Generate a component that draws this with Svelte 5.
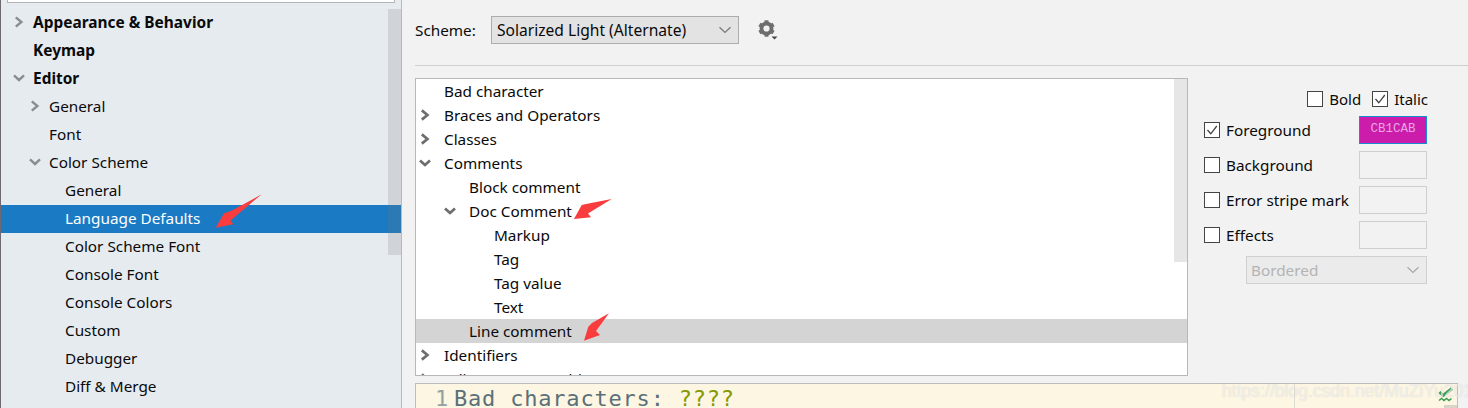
<script>
  const navItems = [
    { label: 'Appearance & Behavior', depth: 0, bold: true, arrow: 'right' },
    { label: 'Keymap', depth: 0, bold: true },
    { label: 'Editor', depth: 0, bold: true, arrow: 'down' },
    { label: 'General', depth: 1, arrow: 'right' },
    { label: 'Font', depth: 1 },
    { label: 'Color Scheme', depth: 1, arrow: 'down' },
    { label: 'General', depth: 2 },
    { label: 'Language Defaults', depth: 2, selected: true },
    { label: 'Color Scheme Font', depth: 2 },
    { label: 'Console Font', depth: 2 },
    { label: 'Console Colors', depth: 2 },
    { label: 'Custom', depth: 2 },
    { label: 'Debugger', depth: 2 },
    { label: 'Diff & Merge', depth: 2 }
  ]

  const treeItems = [
    { label: 'Bad character', depth: 0 },
    { label: 'Braces and Operators', depth: 0, arrow: 'right' },
    { label: 'Classes', depth: 0, arrow: 'right' },
    { label: 'Comments', depth: 0, arrow: 'down' },
    { label: 'Block comment', depth: 1 },
    { label: 'Doc Comment', depth: 1, arrow: 'down' },
    { label: 'Markup', depth: 2 },
    { label: 'Tag', depth: 2 },
    { label: 'Tag value', depth: 2 },
    { label: 'Text', depth: 2 },
    { label: 'Line comment', depth: 1, selected: true },
    { label: 'Identifiers', depth: 0, arrow: 'right' },
    { label: 'Inline parameter hints', depth: 0, arrow: 'right' }
  ]

  const attributes = [
    { label: 'Foreground', checked: true, color: 'CB1CAB' },
    { label: 'Background' },
    { label: 'Error stripe mark' },
    { label: 'Effects' }
  ]

  const arrows = [
    '261.7,194.3 231,211 224,213.3 215.7,227.7 233.3,224.3 230.5,220.5',
    '611.7,199 586,204 581.7,205 574,219 591,217.3 588,213.5',
    '609,313.3 592,323 588.3,326.7 584,340.7 600,335 596,331'
  ]
</script>

{#snippet chevron(dir)}
  <svg class="chevron" width="12" height="12" viewBox="0 0 12 12" aria-hidden="true">
    {#if dir === 'right'}
      <path d="M2.8 1.4 8.4 6l-5.6 4.6" />
    {:else}
      <path d="M1 3.4 6 8l5-4.6" />
    {/if}
  </svg>
{/snippet}

{#snippet checkbox(checked)}
  <span class="box">
    {#if checked}
      <svg width="14" height="14" viewBox="0 0 14 14" aria-hidden="true">
        <path d="M2.5 7 5.8 10.8 11.8 3" />
      </svg>
    {/if}
  </span>
{/snippet}

<div class="window">
  <aside class="sidebar">
    <div class="search"></div>
    <nav class="nav">
      {#each navItems as item}
        <div class="nav-row d{item.depth}" class:bold={item.bold} class:selected={item.selected}>
          {#if item.arrow}
            <span class="nav-arrow">{@render chevron(item.arrow)}</span>
          {/if}
          {item.label}
        </div>
      {/each}
    </nav>
    <div class="side-scroll"></div>
  </aside>

  <main class="content">
    <div class="scheme">
      <span class="scheme-label">Scheme:</span>
      <div class="combo">
        <span>Solarized Light (Alternate)</span>
        <svg width="14" height="8" viewBox="0 0 14 8" aria-hidden="true">
          <path d="M1.5 1.2 7 6.5l5.5-5.3" />
        </svg>
      </div>
      <svg class="gear" width="24" height="24" viewBox="0 0 24 24" aria-hidden="true">
        <g transform="translate(10.5 10.5)">
          <circle r="5" fill="none" stroke="#6e6e6e" stroke-width="3.8" />
          {#each [0, 60, 120, 180, 240, 300] as angle}
            <rect x="-2" y="-8.2" width="4" height="3.2" fill="#6e6e6e" transform="rotate({angle})" />
          {/each}
        </g>
        <path d="M15.5 18.5h6l-3 3z" fill="#444" />
      </svg>
    </div>

    <div class="rule"></div>

    <div class="middle">
      <div class="tree">
        {#each treeItems as item}
          <div class="tree-row t{item.depth}" class:selected={item.selected}>
            {#if item.arrow}
              <span class="tree-arrow">{@render chevron(item.arrow)}</span>
            {/if}
            {item.label}
          </div>
        {/each}
        <div class="tree-scroll"></div>
      </div>

      <div class="options">
        <div class="styles">
          <label class="check">{@render checkbox(false)}Bold</label>
          <label class="check">{@render checkbox(true)}Italic</label>
        </div>
        {#each attributes as attr}
          <div class="attr">
            <label class="check">{@render checkbox(attr.checked)}{attr.label}</label>
            <div class="swatch" class:filled={attr.color}>{attr.color ?? ''}</div>
          </div>
        {/each}
        <div class="effect-select">
          <span>Bordered</span>
          <svg width="14" height="8" viewBox="0 0 14 8" aria-hidden="true">
            <path d="M1.5 1.2 7 6.5l5.5-5.3" />
          </svg>
        </div>
      </div>
    </div>

    <div class="preview">
      <span class="line-no">1</span>
      <span class="code">Bad characters: <span class="bad">????</span></span>
      <div class="margin-line"></div>
      <svg class="status" width="18" height="16" viewBox="0 0 18 16" aria-hidden="true">
        <path d="M1.5 5 5 8.5 14 1.5" fill="none" stroke="#3f9f55" stroke-width="3" />
        <path d="M1 13.5l2.5-2 2.5 2 2.5-2 2.5 2 2.5-2" fill="none" stroke="#3f9f55" stroke-width="1.6" />
      </svg>
      <div class="preview-thumb"></div>
    </div>
  </main>

  <svg class="arrows" width="1468" height="408" viewBox="0 0 1468 408" aria-hidden="true">
    {#each arrows as points}
      <polygon {points} fill="#f93c3e" />
    {/each}
  </svg>
  <div class="watermark">https://blog.csdn.net/MuZiYu2010</div>
</div>

<style>
  :global(body) {
    margin: 0;
    overflow: hidden;
    background: #f2f2f2;
  }

  .window {
    position: relative;
    display: flex;
    width: 1468px;
    height: 408px;
    overflow: hidden;
    font-family: 'Noto Sans', 'Open Sans', sans-serif;
    font-size: 15.3px;
    color: #0a0a0a;
    background: #f2f2f2;
  }

  .sidebar {
    position: relative;
    flex: 0 0 402px;
    box-sizing: border-box;
    height: 408px;
    background: #e6ebf0;
    border-left: 1px solid #6f6a70;
    border-right: 1px solid #b9b9b9;
  }

  .search {
    box-sizing: border-box;
    width: 388px;
    height: 3px;
    margin-left: 6px;
    background: #fff;
    border: 1px solid #b5b5b5;
    border-top: 0;
  }

  .nav { padding-top: 6px; }

  .nav-row {
    position: relative;
    height: 28px;
    line-height: 26px;
    white-space: nowrap;
  }
  .nav-row.d0 { padding-left: 32px; }
  .nav-row.d1 { padding-left: 48px; }
  .nav-row.d2 { padding-left: 64px; }
  .nav-row.bold { font-weight: 700; font-size: 15.45px; }
  .nav-row.selected {
    background: #1a7bc4;
    color: #fff;
  }

  .nav-arrow {
    position: absolute;
    top: 7px;
    display: flex;
  }
  .d0 .nav-arrow { left: 12px; }
  .d1 .nav-arrow { left: 28px; }

  .chevron path {
    fill: none;
    stroke: #8a8d90;
    stroke-width: 2.4;
  }

  .side-scroll {
    position: absolute;
    top: 9px;
    right: 0;
    width: 13px;
    height: 246px;
    background: rgba(120, 120, 120, 0.2);
  }

  .content {
    flex: 1;
    min-width: 0;
    padding-left: 13px;
  }

  .scheme {
    display: flex;
    align-items: center;
    height: 28px;
    padding-top: 16px;
  }
  .scheme-label { width: 76px; }

  .combo {
    box-sizing: border-box;
    display: flex;
    align-items: center;
    justify-content: space-between;
    width: 248px;
    height: 28px;
    padding: 0 6px 0 5px;
    background: #e3e3e3;
    border: 1px solid #adadad;
    font-size: 15.6px;
  }
  .combo path, .effect-select path {
    fill: none;
    stroke: #777;
    stroke-width: 1.2;
  }

  .gear { margin: 0 0 0 17px; }

  .rule {
    height: 1px;
    margin-top: 21px;
    background: #cfcfcf;
  }

  .middle {
    display: flex;
    margin-top: 12px;
  }

  .tree {
    position: relative;
    box-sizing: border-box;
    flex: 0 0 773px;
    height: 298px;
    overflow: hidden;
    background: #fff;
    border: 1px solid #b8b8b8;
  }

  .tree-row {
    position: relative;
    height: 24px;
    line-height: 24px;
    white-space: nowrap;
  }
  .tree-row.t0 { padding-left: 28px; }
  .tree-row.t1 { padding-left: 53px; }
  .tree-row.t2 { padding-left: 78px; }
  .tree-row.selected { background: #d4d4d4; }

  .tree-arrow {
    position: absolute;
    top: 6px;
    display: flex;
  }
  .t0 .tree-arrow { left: 3px; }
  .t1 .tree-arrow { left: 28px; }
  .tree-arrow .chevron path { stroke: #6e6e6e; stroke-width: 2.7; }

  .tree-scroll {
    position: absolute;
    top: 0;
    right: 0;
    width: 13px;
    height: 183px;
    background: #e6e6e6;
  }

  .options {
    display: flex;
    flex-direction: column;
    gap: 7px;
    width: 223px;
    margin-left: 16px;
  }

  .styles {
    display: flex;
    justify-content: flex-end;
    gap: 11px;
    height: 28px;
    margin: 7px -1px -4px 0;
    align-items: center;
    font-size: 15px;
  }

  .check {
    display: flex;
    align-items: center;
    gap: 6px;
    white-space: nowrap;
  }

  .box {
    box-sizing: border-box;
    display: flex;
    align-items: center;
    justify-content: center;
    flex: 0 0 16px;
    width: 16px;
    height: 16px;
    background: #fff;
    border: 1px solid #444;
  }
  .box path {
    fill: none;
    stroke: #444;
    stroke-width: 1.3;
  }

  .attr {
    display: flex;
    align-items: center;
    justify-content: space-between;
    height: 28px;
  }

  .swatch {
    box-sizing: border-box;
    width: 68px;
    height: 28px;
    border: 1px solid #cfcfcf;
    font-family: 'Liberation Mono', monospace;
    font-size: 12.5px;
    line-height: 24px;
    text-align: center;
  }
  .swatch.filled {
    background: #cb1cab;
    border-color: #1a8ad4;
    color: #eaa6de;
  }

  .effect-select {
    box-sizing: border-box;
    display: flex;
    align-items: center;
    justify-content: space-between;
    width: 181px;
    height: 28px;
    margin-left: 42px;
    padding: 0 6px 0 4px;
    background: #ebebeb;
    border: 1px solid #d0d0d0;
    color: #b4b4b4;
  }
  .effect-select path { stroke: #a8a8a8; }

  .preview {
    position: relative;
    box-sizing: border-box;
    width: 1043px;
    height: 40px;
    margin-top: 7px;
    background: #fdf6e3;
    border: 1px solid #bdbdbd;
    font-family: 'DejaVu Sans Mono', monospace;
    font-size: 22px;
    line-height: 30px;
    white-space: nowrap;
    overflow: hidden;
  }
  .line-no {
    position: absolute;
    left: 19px;
    top: 0;
    color: #93a1a1;
  }
  .code {
    position: absolute;
    left: 38px;
    top: 0;
    letter-spacing: 0.8px;
    color: #5a7079;
  }
  .bad {
    color: #859900;
  }
  .margin-line {
    position: absolute;
    left: 878px;
    top: 0;
    width: 1px;
    height: 40px;
    background: #dcdcd0;
  }
  .status {
    position: absolute;
    right: 1px;
    top: 3px;
  }
  .preview-thumb {
    position: absolute;
    right: 0;
    top: 21px;
    width: 13px;
    height: 10px;
    background: #d8d4c8;
  }

  .arrows {
    position: absolute;
    inset: 0;
    pointer-events: none;
  }

  .watermark {
    position: absolute;
    left: 1222px;
    top: 379px;
    font-family: 'Liberation Sans', sans-serif;
    font-size: 17.6px;
    line-height: 24px;
    color: rgba(255, 255, 255, 0.65);
    text-shadow: 0 0 1px rgba(130, 130, 130, 0.35);
    white-space: nowrap;
  }
</style>
